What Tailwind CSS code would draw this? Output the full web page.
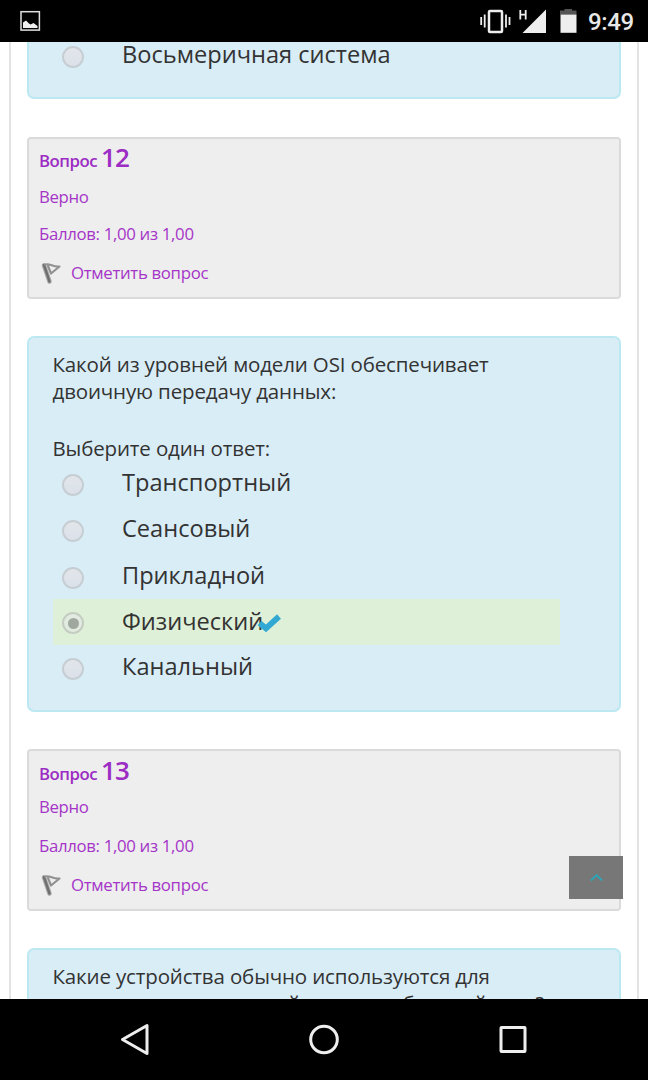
<!DOCTYPE html>
<html lang="ru">
<head>
<meta charset="utf-8">
<title>Тест</title>
<script src="https://cdn.jsdelivr.net/npm/@tailwindcss/browser@4"></script>
</head>
<body class="w-[648px] h-[1080px] overflow-hidden bg-black font-['Open_Sans',sans-serif] whitespace-nowrap">
<svg class="hidden">
  <symbol id="flag" viewBox="0 0 24 26">
    <g fill="none" stroke-linecap="round" stroke-linejoin="round">
      <path d="M5 4.500 L10.500 20.500" stroke="#aaa" stroke-width="4.500"/>
      <path d="M5 4 L10.500 20.500" stroke="#6f6f6f" stroke-width="2.400"/>
      <path d="M6 3.500 C11 2 14 6.500 20.500 5.500 L12 12.500 L9 5" stroke="#919191" stroke-width="2.200"/>
    </g>
  </symbol>
</svg>
<div class="flex flex-col h-full">
  <header class="h-[42px] shrink-0 bg-black flex">
    <svg class="w-[460px] h-[42px]" viewBox="0 0 460 42"><rect x="21" y="11.700" width="18.400" height="18.400" fill="none" stroke="#dedede" stroke-width="1.5"/><path d="M23 28V22.500L26 20.500L29 23.500L30.500 24.500L33.500 23L37.500 26V28Z" fill="#eee"/></svg>
    <svg class="w-[124px] h-[42px]" viewBox="460 0 124 42">
      <g fill="none" stroke="#eee" stroke-width="2"><rect x="489" y="11" width="13" height="21" rx="1" stroke-width="2.500"/><path d="M481.200 17v8M484.700 14.500v13M506 14.500v13M509.500 17v8" stroke-width="1.800"/></g>
      <path d="M546 9.500V33H522.500Z" fill="#eee"/>
      <path d="M520.300 10v9.500M525.700 10v9.500M520.300 14.700h5.400" stroke="#eee" stroke-width="1.800"/>
      <path d="M560 14.500V10.500H564.500V9H572V10.500H576.500V14.500Z" fill="#555"/><rect x="560.500" y="14.500" width="16" height="18.300" fill="#eee"/>
    </svg>
    <div class="pl-[4px] font-['Roboto',sans-serif] font-medium text-[24px] tracking-[-0.4px] leading-[45px] text-[#e8e8e8]">9:49</div>
  </header>

  <main class="relative h-[957px] shrink-0 overflow-hidden bg-white">
    <div class="mx-[9px] h-full border-x-2 border-[#e4e4e4] px-4 text-[#333]">
      <section class="h-[57px] bg-[#d9edf7] border-2 border-t-0 border-[#bce8f1] rounded-b-[7px] px-[23.5px] overflow-hidden">
        <div class="h-[46px] -mt-[9px] flex"><i class="size-[22px] mt-[13px] ml-[9.5px] rounded-full border-2 border-[#c6ced3] bg-linear-to-b from-[#e2e6ea] to-[#dbe1ea] shrink-0"></i><span class="ml-[38px] text-[23.6px] leading-[42px]">Восьмеричная система</span></div>
      </section>

      <section class="mt-[38px] h-[162px] bg-[#eee] border-2 border-[#dadada] rounded-[4px] pl-[10px] pt-px text-[#a535c8] text-[16.8px] tracking-[-0.32px] leading-6">
        <h2 class="h-[34px] text-[26px] tracking-[-0.9px] leading-[34px] font-semibold text-[#9b2cc4]"><span class="text-[16.8px] tracking-[-0.5px] leading-none">Вопрос</span><span class="ml-[4px] leading-none">12</span></h2>
        <p class="mt-[11px]">Верно</p>
        <p class="mt-[13px]">Баллов: 1,00 из 1,00</p>
        <p class="mt-[15px] flex"><svg class="w-[24px] h-[26px]"><use href="#flag"/></svg><span class="ml-[8px]">Отметить вопрос</span></p>
      </section>

      <section class="mt-[37px] h-[376px] bg-[#d9edf7] border-2 border-[#bce8f1] rounded-[7px] px-[23.5px] pt-[13px]">
        <p class="text-[20.5px] tracking-[-0.15px] leading-[27px]">Какой из уровней модели OSI обеспечивает<br>двоичную передачу данных:</p>
        <p class="mt-[30px] h-[26px] text-[20.5px] tracking-[-0.15px] leading-[27px]">Выберите один ответ:</p>
        <div class="h-[46px] flex"><i class="size-[22px] mt-[13px] ml-[9.5px] rounded-full border-2 border-[#c6ced3] bg-linear-to-b from-[#e2e6ea] to-[#dbe1ea] shrink-0"></i><span class="ml-[38px] text-[23.6px] leading-[42px]">Транспортный</span></div>
        <div class="h-[46px] flex"><i class="size-[22px] mt-[13px] ml-[9.5px] rounded-full border-2 border-[#c6ced3] bg-linear-to-b from-[#e2e6ea] to-[#dbe1ea] shrink-0"></i><span class="ml-[38px] text-[23.6px] leading-[42px]">Сеансовый</span></div>
        <div class="h-[46px] flex"><i class="size-[22px] mt-[14px] ml-[9.5px] rounded-full border-2 border-[#c6ced3] bg-linear-to-b from-[#e2e6ea] to-[#dbe1ea] shrink-0"></i><span class="ml-[38px] text-[23.6px] leading-[44px]">Прикладной</span></div>
        <div class="h-[46px] w-[507px] bg-[#dff0d8] flex"><i class="size-[22px] mt-[13px] ml-[9.5px] rounded-full border-2 border-[#c5cdc3] bg-[#e2ebe0] shrink-0 flex items-center justify-center"><b class="size-[11px] rounded-full bg-[#a0a79f]"></b></i><span class="ml-[38px] text-[23.6px] leading-[44px]">Физический</span><svg class="w-[25px] h-[20px] mt-[15px] -ml-[6px] shrink-0" viewBox="0 0 25 20"><path d="M2.500 9L9 14.500L22 2.500" fill="none" stroke="#31a9d3" stroke-width="5.800"/></svg></div>
        <div class="h-[46px] flex"><i class="size-[22px] mt-[13px] ml-[9.5px] rounded-full border-2 border-[#c6ced3] bg-linear-to-b from-[#e2e6ea] to-[#dbe1ea] shrink-0"></i><span class="ml-[38px] text-[23.6px] leading-[42px]">Канальный</span></div>
      </section>

      <section class="mt-[37px] h-[162px] bg-[#eee] border-2 border-[#dadada] rounded-[4px] pl-[10px] pt-px text-[#a535c8] text-[16.8px] tracking-[-0.32px] leading-6">
        <h2 class="h-[34px] text-[26px] tracking-[-0.9px] leading-[36px] font-semibold text-[#9b2cc4]"><span class="text-[16.8px] tracking-[-0.5px] leading-none">Вопрос</span><span class="ml-[4px] leading-none">13</span></h2>
        <p class="mt-[9px]">Верно</p>
        <p class="mt-[15px]">Баллов: 1,00 из 1,00</p>
        <p class="mt-[15px] flex"><svg class="w-[24px] h-[26px]"><use href="#flag"/></svg><span class="ml-[8px]">Отметить вопрос</span></p>
      </section>

      <section class="mt-[37px] h-[120px] bg-[#d9edf7] border-2 border-[#bce8f1] rounded-[7px] px-[23.5px] pt-[13px]">
        <p class="text-[20.5px] tracking-[-0.15px] leading-[27px]">Какие устройства обычно используются для<br>подключения локальной сети к глобальной сети?</p>
      </section>
    </div>
    <button class="absolute left-[569px] top-[814px] w-[54px] h-[43px] bg-[#777] flex items-center justify-center"><svg class="w-[13px] h-[9px]" viewBox="0 0 13 9"><path d="M1 7.500L6.500 2L12 7.500" fill="none" stroke="#2ba6b8" stroke-width="1.800"/></svg></button>
  </main>

  <nav class="h-[81px] bg-black">
    <svg class="w-[648px] h-[81px]" viewBox="0 999 648 81" fill="none" stroke="#eee" stroke-width="3" stroke-linejoin="round"><path d="M147 1025.500V1053.500L122.500 1039.500Z"/><circle cx="324" cy="1039.500" r="13.300"/><rect x="501" y="1027.500" width="24" height="24" rx=".5"/></svg>
  </nav>
</div>
</body>
</html>
